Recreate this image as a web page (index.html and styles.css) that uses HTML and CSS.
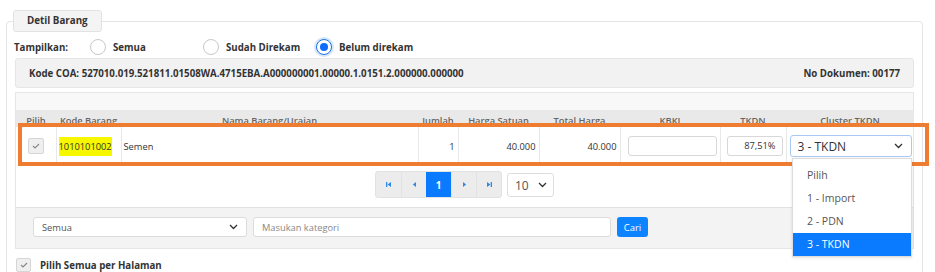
FILE: index.html
```html
<!DOCTYPE html>
<html lang="id">
<head>
  <meta charset="UTF-8">
  <title>Detil Barang</title>
  <link rel="stylesheet" href="styles.css">
</head>
<body>
<div class="page">
  <fieldset class="card">
    <legend class="tab">Detil Barang</legend>

    <div class="show-row">
      <span class="show-label">Tampilkan:</span>
      <label class="radio"><span class="dot"></span>Semua</label>
      <label class="radio"><span class="dot"></span>Sudah Direkam</label>
      <label class="radio"><span class="dot on"></span>Belum direkam</label>
    </div>

    <div class="coa-bar">
      <span>Kode COA: 527010.019.521811.01508WA.4715EBA.A000000001.00000.1.0151.2.000000.000000</span>
      <span>No Dokumen: 00177</span>
    </div>

    <div class="grid-panel">
      <div class="grid-top"></div>
      <table class="grid">
        <colgroup>
          <col style="width:40px"><col style="width:65px"><col style="width:297px">
          <col style="width:40px"><col style="width:81px"><col style="width:81px">
          <col style="width:100px"><col style="width:66px"><col style="width:128px">
        </colgroup>
        <thead>
          <tr>
            <th>Pilih</th><th>Kode Barang</th><th>Nama Barang/Uraian</th>
            <th>Jumlah</th><th>Harga Satuan</th><th>Total Harga</th>
            <th>KBKI</th><th>TKDN</th><th>Cluster TKDN</th>
          </tr>
        </thead>
        <tbody>
          <tr>
            <td class="c"><span class="check">
              <svg width="8" height="6" viewBox="0 0 8 6"><path d="M1 3l2 2 4-4" fill="none" stroke="#888" stroke-width="1.1"/></svg>
            </span></td>
            <td><span class="mark">1010101002</span></td>
            <td>Semen</td>
            <td class="r">1</td>
            <td class="r">40.000</td>
            <td class="r">40.000</td>
            <td class="kbki"><span class="box"></span></td>
            <td class="tkdn"><span class="box num">87,51%</span></td>
            <td class="cl"><span class="sel focus">3 - TKDN
              <svg width="9" height="6" viewBox="0 0 9 6"><path d="M1 1l3.5 3.5L8 1" fill="none" stroke="#333" stroke-width="1.3"/></svg>
            </span></td>
          </tr>
        </tbody>
      </table>

      <div class="pager">
        <div class="pages">
          <span class="pg"><svg width="7" height="7" viewBox="0 0 7 7"><rect x="1" y="1" width="1.3" height="5" fill="#2f8ae6"/><path d="M6 1v5L2.5 3.5z" fill="#2f8ae6"/></svg></span>
          <span class="pg"><svg width="7" height="7" viewBox="0 0 7 7"><path d="M5 1v5L1.8 3.5z" fill="#2f8ae6"/></svg></span>
          <span class="pg active">1</span>
          <span class="pg"><svg width="7" height="7" viewBox="0 0 7 7"><path d="M2 1v5l3.2-2.5z" fill="#2f8ae6"/></svg></span>
          <span class="pg"><svg width="7" height="7" viewBox="0 0 7 7"><path d="M1 1v5l3.5-2.5z" fill="#2f8ae6"/><rect x="4.7" y="1" width="1.3" height="5" fill="#2f8ae6"/></svg></span>
        </div>
        <span class="size">10
          <svg width="9" height="6" viewBox="0 0 9 6"><path d="M1 1l3.5 3.5L8 1" fill="none" stroke="#333" stroke-width="1.3"/></svg>
        </span>
      </div>

      <div class="filter-bar">
        <span class="fsel">Semua
          <svg width="9" height="6" viewBox="0 0 9 6"><path d="M1 1l3.5 3.5L8 1" fill="none" stroke="#333" stroke-width="1.3"/></svg>
        </span>
        <span class="finput">Masukan kategori</span>
        <button class="btn">Cari</button>
      </div>
    </div>

    <div class="select-all">
      <span class="check">
        <svg width="8" height="6" viewBox="0 0 8 6"><path d="M1 3l2 2 4-4" fill="none" stroke="#888" stroke-width="1.1"/></svg>
      </span>
      Pilih Semua per Halaman
    </div>
  </fieldset>

  <div class="annot"></div>

  <ul class="options">
    <li>Pilih</li>
    <li>1 - Import</li>
    <li>2 - PDN</li>
    <li class="hl">3 - TKDN</li>
  </ul>
</div>
</body>
</html>
```

FILE: styles.css
```css
* {
  box-sizing: border-box;
}
body {
  margin: 0;
  background: #fff;
  font-family: "Open Sans", "Noto Sans", sans-serif;
  font-size: 9.3px;
  color: #333;
}
.page {
  position: relative;
  padding: 10px 12px 0 6px;
  height: 272px;
  overflow: hidden;
}
.card {
  margin: 0;
  padding: 0 8px 20px;
  border: 1px solid #e4e4e4;
  border-radius: 4px;
  min-width: 0;
}
.tab {
  margin-left: -2px;
  padding: 0 13px;
  height: 22px;
  line-height: 20px;
  background: #f4f4f4;
  border: 1px solid #e2e2e2;
  border-radius: 3px;
  font-weight: 700;
  font-size: 9.8px;
}
.show-row {
  display: flex;
  align-items: center;
  height: 22px;
  margin: 4px 0 0 -1px;
  font-weight: 700;
  font-size: 9.7px;
}
.show-label {
  width: 76px;
}
.radio {
  width: 113px;
  display: flex;
  align-items: center;
  gap: 7px;
}
.dot {
  width: 16px;
  height: 16px;
  border: 1px solid #c8c8c8;
  border-radius: 50%;
  background: #fff;
  display: flex;
  align-items: center;
  justify-content: center;
}
.dot.on {
  border-color: #1a73e8;
  box-shadow: 0 0 0 2px #d6e6fb;
}
.dot.on::after {
  content: "";
  width: 8px;
  height: 8px;
  border-radius: 50%;
  background: #0d6efd;
}
.coa-bar {
  display: flex;
  justify-content: space-between;
  align-items: center;
  height: 30px;
  padding: 0 13px;
  background: #f2f2f2;
  border: 1px solid #e6e6e6;
  border-radius: 3px;
  font-weight: 700;
  font-size: 9.7px;
}
.grid-panel {
  margin-top: 4px;
  border: 1px solid #e6e6e6;
}
.grid-top {
  height: 17px;
  background: #f8f8f8;
}
.grid {
  width: 100%;
  border-collapse: collapse;
  table-layout: fixed;
}
.grid th {
  height: 17px;
  padding: 4px 0 0;
  background: #e9e9e9;
  color: #666;
  font-weight: 600;
  text-align: center;
  white-space: nowrap;
}
.grid td {
  height: 38px;
  padding: 0 2px;
  border-left: 1px solid #e8e8e8;
  white-space: nowrap;
}
.grid td:first-child {
  border-left: none;
}
.grid td.c {
  text-align: center;
}
.grid td.r {
  text-align: right;
  padding-right: 3px;
}
.check {
  display: inline-flex;
  align-items: center;
  justify-content: center;
  width: 16px;
  height: 16px;
  background: #efefef;
  border: 1px solid #d6d6d6;
  border-radius: 2px;
  vertical-align: middle;
}
.mark {
  background: #f7f700;
  padding: 3px 0;
}
.grid td.kbki {
  padding: 0 3px 0 7px;
}
.grid td.tkdn {
  padding: 0 3px 0 6px;
}
.box {
  display: block;
  height: 20px;
  line-height: 18px;
  border: 1px solid #d8d8d8;
  border-radius: 3px;
  background: #fff;
}
.box.num {
  text-align: right;
  padding-right: 6px;
}
.grid td.cl {
  padding: 0 2px 0 3px;
}
.sel {
  display: flex;
  align-items: center;
  justify-content: space-between;
  height: 22px;
  padding: 0 8px 0 7px;
  border: 1px solid #a9c9f5;
  border-radius: 3px;
  background: #fff;
  font-size: 12px;
  color: #333;
}
.pager {
  display: flex;
  justify-content: center;
  align-items: flex-start;
  gap: 5px;
  margin-top: 6px;
}
.pages {
  display: flex;
  background: #ececec;
  border: 1px solid #e2e2e2;
  border-radius: 3px;
}
.pg {
  width: 25px;
  height: 25px;
  display: flex;
  align-items: center;
  justify-content: center;
  border-left: 1px solid #e2e2e2;
}
.pg:first-child {
  border-left: none;
}
.pg.active {
  background: #0a7bff;
  color: #fff;
  font-weight: 700;
  font-size: 10px;
  border-left: none;
}
.size {
  display: flex;
  align-items: center;
  justify-content: space-between;
  width: 47px;
  height: 24px;
  margin-top: 2px;
  padding: 0 6px 0 7px;
  border: 1px solid #dedede;
  border-radius: 3px;
  font-size: 12px;
  color: #555;
}
.filter-bar {
  display: flex;
  align-items: center;
  gap: 6px;
  margin-top: 9px;
  padding: 9px 17px 11px;
  border-top: 1px solid #e2e2e2;
  background: #f3f3f3;
}
.fsel, .finput {
  display: flex;
  align-items: center;
  justify-content: space-between;
  height: 20px;
  padding: 0 8px;
  background: #fff;
  border: 1px solid #dcdcdc;
  border-radius: 3px;
  color: #555;
}
.fsel {
  width: 214px;
}
.finput {
  width: 358px;
  color: #888;
}
.btn {
  height: 20px;
  width: 31px;
  padding: 0;
  border: none;
  border-radius: 3px;
  background: #0d84ff;
  color: #fff;
  font-family: inherit;
  font-size: 9.5px;
}
.select-all {
  display: flex;
  align-items: center;
  gap: 9px;
  margin: 9px 0 0 1px;
  font-weight: 700;
  font-size: 9.7px;
}
.select-all .check {
  width: 15px;
  height: 14px;
}
.annot {
  position: absolute;
  left: 18px;
  top: 123px;
  width: 911px;
  height: 43px;
  border: 4px solid #ee7d31;
}
.options {
  position: absolute;
  left: 792px;
  top: 158px;
  width: 120px;
  margin: 0;
  padding: 5px 0 0;
  list-style: none;
  background: #fff;
  border: 1px solid #dcdcdc;
  box-shadow: 0 1px 3px rgba(0,0,0,0.12);
  font-size: 10.5px;
  color: #555;
}
.options li {
  height: 23px;
  line-height: 23px;
  padding-left: 14px;
}
.options li.hl {
  background: #0a7bff;
  color: #fff;
}
```
